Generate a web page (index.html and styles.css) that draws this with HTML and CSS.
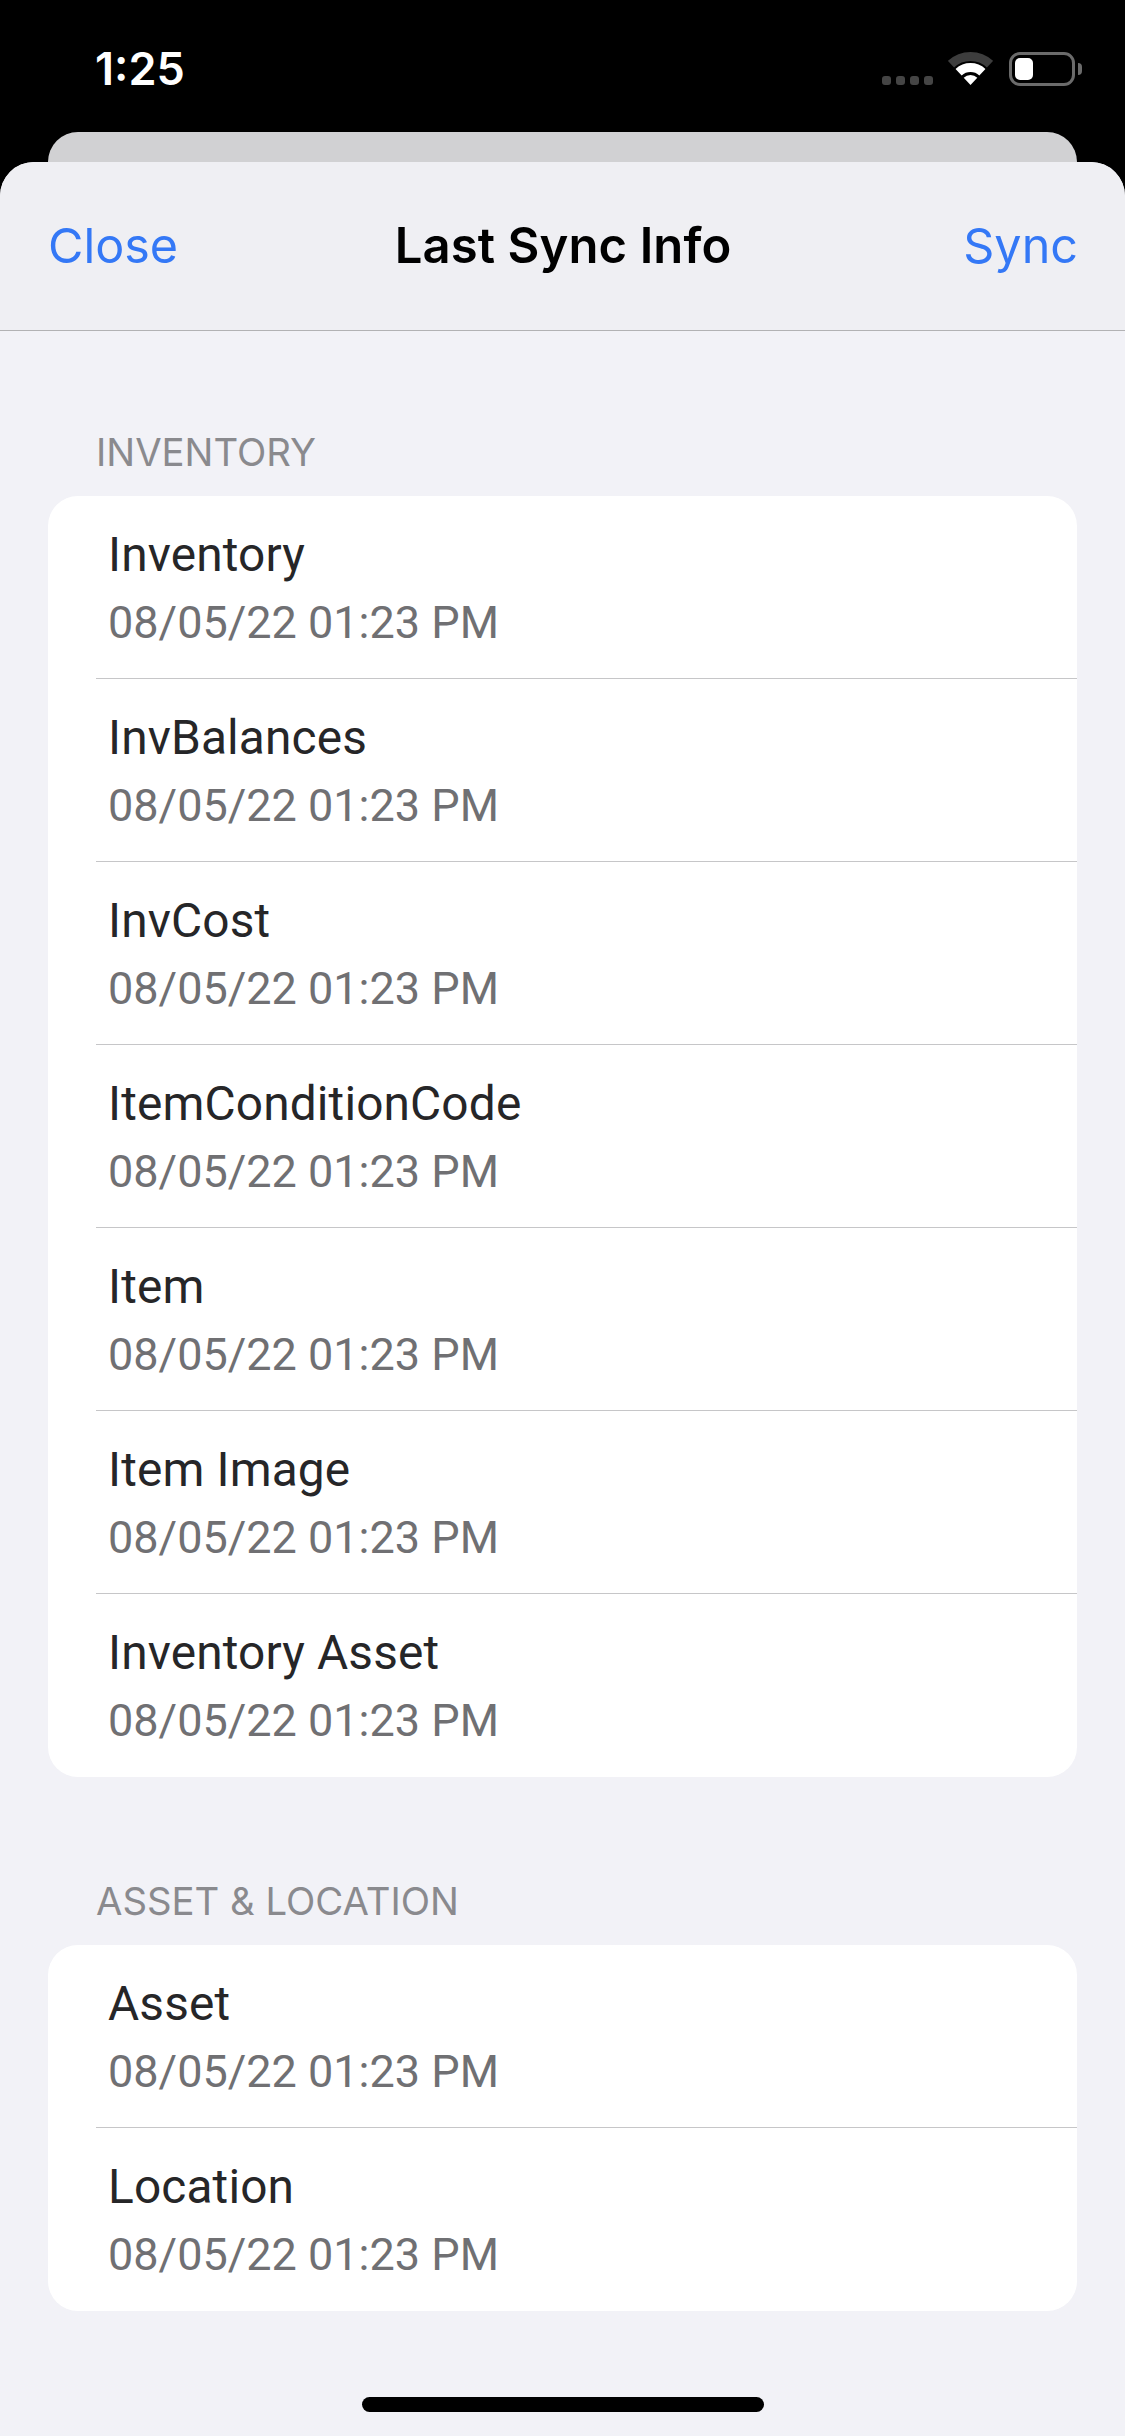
FILE: index.html
```html
<!DOCTYPE html>
<html lang="en">
<head>
<meta charset="utf-8">
<title>Last Sync Info</title>
<link rel="stylesheet" href="styles.css">
</head>
<body>
<div class="screen">
  <header class="status">
    <span class="time">1:25</span>
    <div class="status-icons">
      <div class="signal"><i></i><i></i><i></i><i></i></div>
      <svg class="wifi" viewBox="0 0 45 33" width="45" height="33">
        <path d="M3.06 12.16A28.5 28.5 0 0 1 41.94 12.16" fill="none" stroke="#3d3d3d" stroke-width="9"/>
        <path d="M10.6 20.2A17.5 17.5 0 0 1 34.4 20.2" fill="none" stroke="#fff" stroke-width="9"/>
        <path d="M22.5 33L15.68 25.69A10 10 0 0 1 29.32 25.69Z" fill="#fff"/>
      </svg>
      <div class="battery"><div class="battery-level"></div></div>
      <div class="battery-cap"></div>
    </div>
  </header>
  <div class="back-card"></div>
  <main class="sheet">
    <nav class="nav">
      <a class="nav-btn">Close</a>
      <h1 class="nav-title">Last Sync Info</h1>
      <a class="nav-btn nav-right">Sync</a>
    </nav>
    <div class="content">
      <section class="section">
        <h2 class="section-head">INVENTORY</h2>
        <ul class="card">
          <li class="row"><span class="row-title">Inventory</span><span class="row-date">08/05/22 01:23 PM</span></li>
          <li class="row"><span class="row-title">InvBalances</span><span class="row-date">08/05/22 01:23 PM</span></li>
          <li class="row"><span class="row-title">InvCost</span><span class="row-date">08/05/22 01:23 PM</span></li>
          <li class="row"><span class="row-title">ItemConditionCode</span><span class="row-date">08/05/22 01:23 PM</span></li>
          <li class="row"><span class="row-title">Item</span><span class="row-date">08/05/22 01:23 PM</span></li>
          <li class="row"><span class="row-title">Item Image</span><span class="row-date">08/05/22 01:23 PM</span></li>
          <li class="row"><span class="row-title">Inventory Asset</span><span class="row-date">08/05/22 01:23 PM</span></li>
        </ul>
      </section>
      <section class="section">
        <h2 class="section-head">ASSET &amp; LOCATION</h2>
        <ul class="card">
          <li class="row"><span class="row-title">Asset</span><span class="row-date">08/05/22 01:23 PM</span></li>
          <li class="row"><span class="row-title">Location</span><span class="row-date">08/05/22 01:23 PM</span></li>
        </ul>
      </section>
    </div>
    <div class="home-bar"></div>
  </main>
</div>
</body>
</html>
```
FILE: styles.css
```css
* { box-sizing: border-box; }
html, body { margin: 0; padding: 0; background: #000; }
.screen {
  width: 1125px;
  height: 2436px;
  display: flex;
  flex-direction: column;
  overflow: hidden;
  background: #000;
  font-family: Roboto, sans-serif;
}
.status {
  height: 132px;
  flex: none;
  display: flex;
  justify-content: space-between;
  padding: 52px 43px 0 95px;
}
.time {
  font-family: Inter, sans-serif;
  font-weight: 600;
  font-size: 45px;
  line-height: 34px;
  color: #fff;
}
.status-icons {
  display: flex;
  align-items: flex-start;
  height: 34px;
}
.signal {
  display: flex;
  gap: 5px;
  margin-top: 24px;
  margin-right: 15px;
}
.signal i {
  width: 9px;
  height: 9px;
  border-radius: 3px;
  background: #454545;
}
.wifi { display: block; margin-right: 16px; }
.battery {
  width: 66px;
  height: 34px;
  border: 3px solid #6b6b6b;
  border-radius: 11px;
  padding: 3px;
}
.battery-level {
  width: 18px;
  height: 22px;
  background: #fff;
  border-radius: 5px;
}
.battery-cap {
  width: 4px;
  height: 12px;
  margin: 11px 0 0 3px;
  background: #6b6b6b;
  border-radius: 0 4px 4px 0;
}
.back-card {
  height: 30px;
  flex: none;
  margin: 0 48px;
  background: #d1d1d3;
  border-radius: 30px 30px 0 0;
}
.sheet {
  flex: 1;
  display: flex;
  flex-direction: column;
  background: #f2f2f7;
  border-radius: 34px 34px 0 0;
  overflow: hidden;
  position: relative;
}
.nav {
  height: 169px;
  flex: none;
  display: grid;
  grid-template-columns: 1fr auto 1fr;
  align-items: center;
  padding: 0 47px 0 48px;
  background: #efeff3;
  border-bottom: 1px solid #b2b2b4;
  font-family: Inter, sans-serif;
}
.nav-btn {
  font-size: 48.5px;
  line-height: 60px;
  color: #3478f6;
}
.nav-right { text-align: right; }
.nav-title {
  margin: 0;
  font-size: 49px;
  line-height: 60px;
  font-weight: 600;
  letter-spacing: 0.1px;
  color: #000;
}
.content { padding: 0 48px 0; }
.section-head {
  margin: 0;
  padding: 99px 0 0 48px;
  height: 165px;
  font-family: Inter, sans-serif;
  font-weight: 400;
  font-size: 38.3px;
  line-height: 44px;
  color: #8a8a8e;
}
.section + .section .section-head { height: 168px; padding-top: 102px; }
.card {
  list-style: none;
  margin: 0;
  padding: 0;
  background: #fff;
  border-radius: 30px;
  overflow: hidden;
}
.row {
  height: 183px;
  display: flex;
  flex-direction: column;
  padding: 29px 0 0 60px;
  position: relative;
}
.row + .row::before {
  content: "";
  position: absolute;
  top: -1px;
  left: 48px;
  right: 0;
  height: 1px;
  background: #c6c6c8;
}
.row-title {
  font-size: 47.8px;
  line-height: 60px;
  letter-spacing: 0.15px;
  color: #262628;
}
.row-date {
  font-size: 45px;
  line-height: 60px;
  margin-top: 8px;
  color: #707073;
}
.home-bar {
  position: absolute;
  left: 362px;
  bottom: 24px;
  width: 402px;
  height: 15px;
  border-radius: 8px;
  background: #000;
}
```
